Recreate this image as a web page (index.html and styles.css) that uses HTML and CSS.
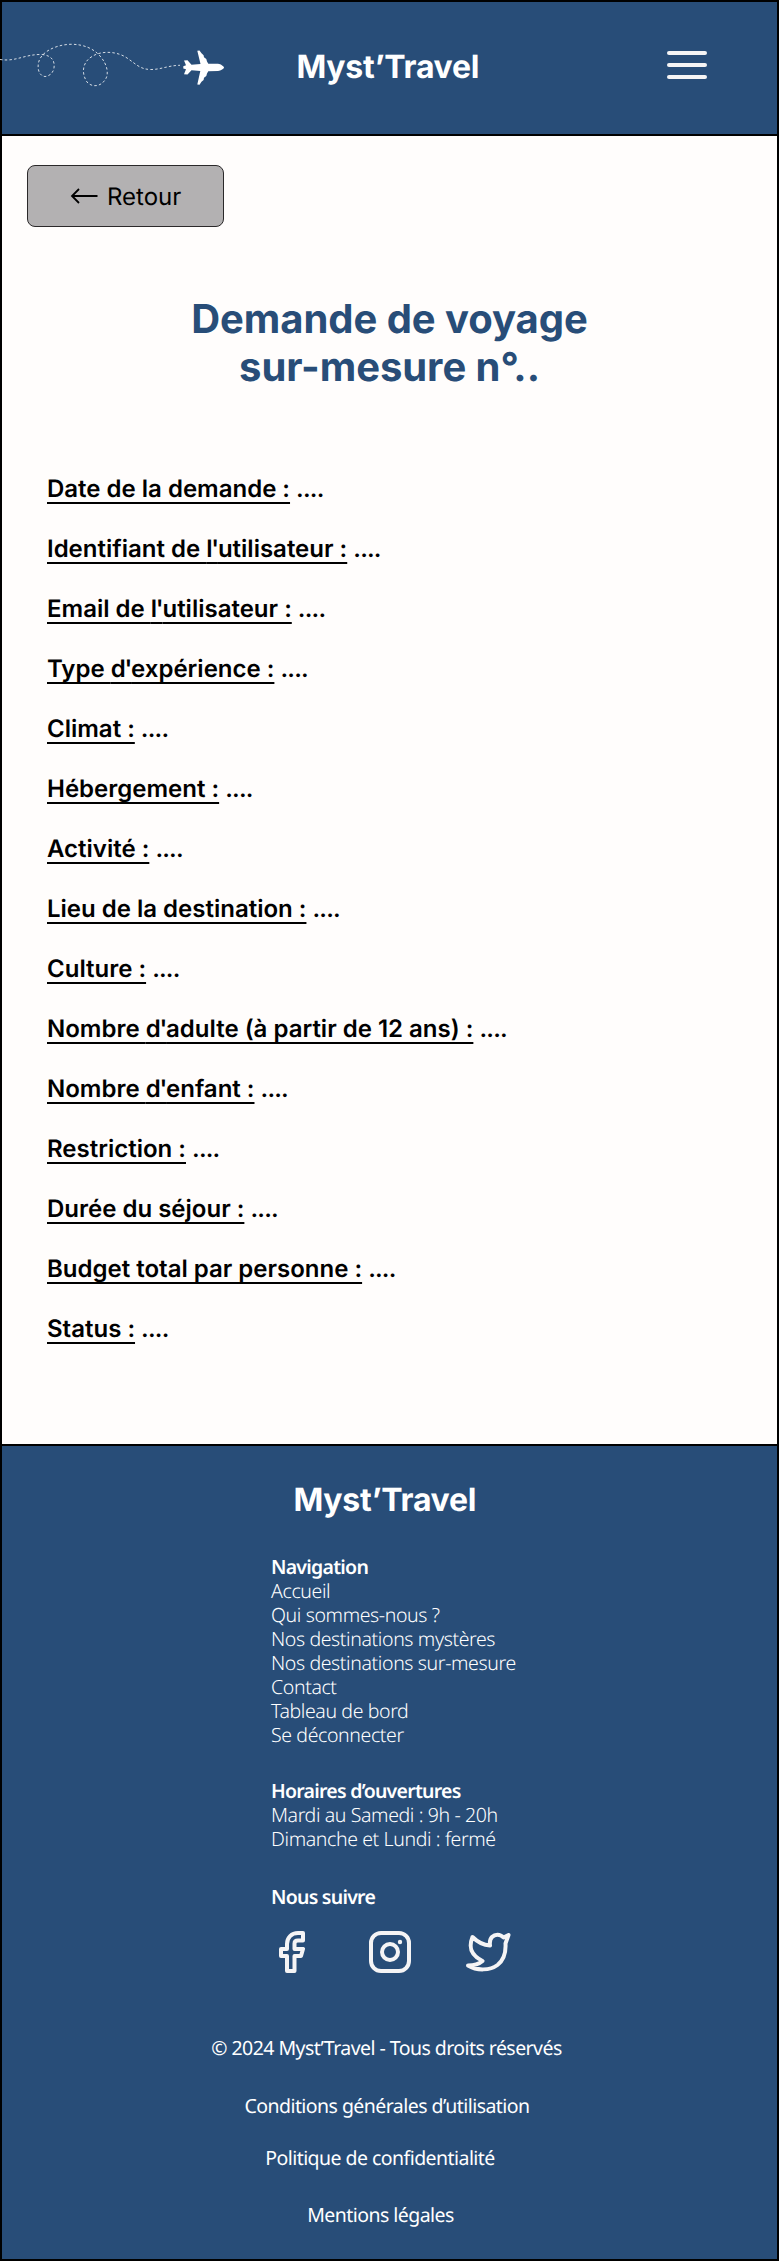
FILE: index.html
```html
<!DOCTYPE html>
<html lang="fr">
<head>
<meta charset="utf-8">
<title>Myst’Travel</title>
<link rel="stylesheet" href="styles.css">
</head>
<body>
<div class="page">
  <header class="header">
    <svg class="flight" width="226" height="60" viewBox="0 0 226 60" fill="none">
      <path class="trail" d="M0 23.500C16 26 25 18 42 18.500C52 19.500 55 25 54 32C53 38 48 40.500 45 40.500C39 40 37.500 33 38.300 28C39.500 17 54 9 70 8.300C84 8 94 13 100 20C108 29 109 39 105 44C100 51.500 91 51 87 46C81 37 82.500 26 92 20.500C101 14.500 117 15 127 22C136 28 140 33.500 151 33.500C161 33.500 168 29.500 180 29.300"/>
      <path transform="translate(0 4)" fill="#fff" d="M183.300 26.300L186 25.300L184 20.500L187.500 20.200L191.500 24.800L200.500 24L197.300 10.800L199.500 10.500L201.500 13.200L203.600 15.200L204 17.300L206.300 19L207 21.500L208.300 23.700H218C221 24 224 26.500 224 27.500C224 28.500 221 30.800 218 31L208.300 31.200L207 33.500L206.300 36L204 37.800L203.600 40L201.500 41.800L199.500 44.800L197.300 44.600L200.300 31L191.500 30.200L187.500 34.600L184 34.200L186 29.300L183.300 28.500Z"/>
    </svg>
    <div class="brand">Myst’Travel</div>
    <div class="burger"><span></span><span></span><span></span></div>
  </header>
  <main class="main">
    <a class="back"><svg width="28" height="16" viewBox="0 0 28 16"><path d="M9 1L2 8L9 15M2 8H27.500"/></svg><span>Retour</span></a>
    <h1 class="title">Demande de voyage<br>sur-mesure n°..</h1>
    <ul class="fields">
      <li><u>Date de la demande :</u> <span>....</span></li>
      <li><u>Identifiant de <b>l'</b>utilisateur :</u> <span>....</span></li>
      <li><u>Email de <b>l'</b>utilisateur :</u> <span>....</span></li>
      <li><u>Type <b>d'</b>expérience :</u> <span>....</span></li>
      <li><u>Climat :</u> <span>....</span></li>
      <li><u>Hébergement :</u> <span>....</span></li>
      <li><u>Activité :</u> <span>....</span></li>
      <li><u>Lieu de la destination :</u> <span>....</span></li>
      <li><u>Culture :</u> <span>....</span></li>
      <li><u>Nombre <b>d'</b>adulte (à partir de 12 ans) :</u> <span>....</span></li>
      <li><u>Nombre <b>d'</b>enfant :</u> <span>....</span></li>
      <li><u>Restriction :</u> <span>....</span></li>
      <li><u>Durée du séjour :</u> <span>....</span></li>
      <li><u>Budget total par personne :</u> <span>....</span></li>
      <li><u>Status :</u> <span>....</span></li>
    </ul>
  </main>
  <footer class="footer">
    <div class="brand footer-brand">Myst’Travel</div>
    <div class="columns">
      <nav class="block nav">
        <h2>Navigation</h2>
        <p>Accueil</p>
        <p>Qui sommes-nous ?</p>
        <p>Nos destinations mystères</p>
        <p>Nos destinations sur-mesure</p>
        <p>Contact</p>
        <p>Tableau de bord</p>
        <p>Se déconnecter</p>
      </nav>
      <section class="block hours">
        <h2>Horaires d’ouvertures</h2>
        <p>Mardi au Samedi : 9h - 20h</p>
        <p>Dimanche et Lundi : fermé</p>
      </section>
      <section class="block follow">
        <h2>Nous suivre</h2>
        <div class="social">
          <svg width="26" height="42" viewBox="0 0 26 42"><path d="M24 2H19C12.500 2 8 6.500 8 13V18H2V25H8V40H15.500V25H22L24 18H15.500V12.500C15.500 10.500 17 9.500 19 9.500H24Z"/></svg>
          <svg width="42" height="42" viewBox="0 0 42 42"><rect x="2" y="2" width="38" height="38" rx="10"/><circle cx="21" cy="21" r="8"/><circle class="dot" cx="31" cy="11" r="2.200"/></svg>
          <svg width="46" height="42" viewBox="0 0 46 42"><path d="M42.500 4L37.500 6.500C34 2.800 29 3 26 6C24 8 23.500 10.500 24 14.500C15.500 14 10.500 10 6.500 6C2.500 16 4.500 24 16.500 30C12.500 33.500 8 34.500 2 34.500C11 40 24 39.500 31.500 34C38 29 40 21 39.500 12.500Z"/></svg>
        </div>
      </section>
    </div>
    <div class="legal">
      <p class="l1">© 2024 Myst’Travel - Tous droits réservés</p>
      <p class="l2">Conditions générales d’utilisation</p>
      <p class="l3">Politique de confidentialité</p>
      <p class="l4">Mentions légales</p>
    </div>
  </footer>
</div>
</body>
</html>
```
FILE: styles.css
```css
* { box-sizing: border-box; margin: 0; padding: 0; }
body { background: #fffdfc; font-family: Inter, "Liberation Sans", sans-serif; color: #000; text-rendering: geometricPrecision; }
.page { width: 779px; height: 2261px; border: 2px solid #000; display: flex; flex-direction: column; background: #fffdfc; }
.header { height: 134px; background: #284d78; border-bottom: 2px solid #000; display: flex; align-items: flex-start; }
.flight { margin: 34px 0 0 -2px; flex: none; }
.trail { stroke: #fff; stroke-opacity: .8; stroke-width: 1; stroke-dasharray: 2.500 2.200; }
.brand { font-size: 32px; line-height: 40px; font-weight: 700; color: #fff; letter-spacing: -.3px; }
.header .brand { margin: 45px 0 0 70.500px; width: 185px; white-space: nowrap; }
.burger { margin: 49px 0 0 185.500px; width: 40px; display: flex; flex-direction: column; gap: 8px; }
.burger span { height: 4px; border-radius: 2px; background: #f5f4f5; }
.main { height: 1308px; padding: 29px 25px 0; }
.back { display: flex; align-items: center; width: 197px; height: 62px; padding-left: 42px; gap: 9px; border: 1px solid #2b292a; border-radius: 8px; background: #b3b1b2; font-size: 24px; line-height: 29px; }
.back svg { fill: none; stroke: #000; stroke-width: 1.800; }
.title { margin-top: 68px; text-align: center; font-size: 40px; line-height: 48px; font-weight: 700; color: #284d78; letter-spacing: -.05px; }
.fields { list-style: none; margin: 83px 0 0 20px; font-size: 24px; line-height: 29px; font-weight: 600; }
.fields li { height: 60px; }
.fields u { text-decoration-skip-ink: none; text-decoration-thickness: 1.500px; text-underline-offset: 5px; }
.fields b { font-weight: 600; letter-spacing: -1.200px; }
.fields span { letter-spacing: -.8px; }
.footer { flex: 1; background: #284d78; border-top: 2px solid #000; color: #fff; font-family: "Noto Sans", "Open Sans", sans-serif; font-size: 19.500px; line-height: 24px; padding-top: 34px; white-space: nowrap; }
.footer-brand { font-family: Inter, sans-serif; margin-left: 291.500px; line-height: 40px; }
.columns { margin: 35px 0 0 269px; }
.block h2 { font-size: 19.500px; line-height: 24px; font-weight: 600; letter-spacing: -.75px; }
.block p { font-weight: 300; letter-spacing: -.38px; }
.hours { margin-top: 32px; }
.follow { margin-top: 34px; }
.social { display: flex; margin: 22px 0 0 8px; }
.social svg { fill: none; stroke: #f5f4f5; stroke-width: 4; stroke-linejoin: round; }
.social svg + svg { margin-left: 64px; }
.social svg:last-child { margin-left: 55px; }
.social .dot { fill: #f5f4f5; stroke: none; }
.legal { margin-top: 63px; text-align: center; letter-spacing: -.550px; }
.l1 { padding-right: 6px; }
.l2 { margin-top: 34px; padding-right: 5px; }
.l3 { margin-top: 28px; padding-right: 19px; }
.l4 { margin-top: 33px; padding-right: 18px; }
```
